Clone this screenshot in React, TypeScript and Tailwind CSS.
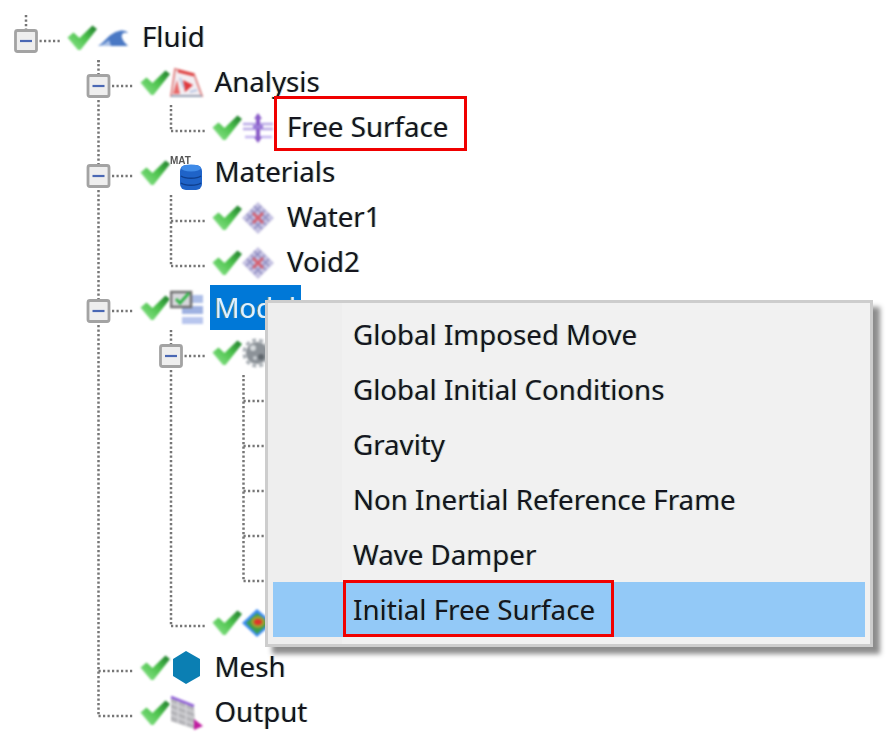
import type { ReactNode } from 'react';

// fake cleartype fringe + upscaling blur from the screenshot
const textLook =
	"font-['Noto_Sans','Open_Sans',sans-serif] text-[27.7px] leading-none blur-[0.55px] [text-shadow:1px_0_0_rgba(0,150,255,0.4),-1px_0_0_rgba(255,170,0,0.4)]";

const LEVEL_STEP = 72.5;
const ROW_MID = 22;

type TreeRow = {
	level: number;
	through?: number[];
	expanded?: boolean;
	last?: boolean;
	first?: boolean;
	label?: string;
	icon?: ReactNode;
	selected?: boolean;
	marked?: boolean;
};

function CheckMark() {
	return (
		<svg width="30" height="26" viewBox="0 0 30 26" className="shrink-0 blur-[0.8px]">
			<defs>
				<linearGradient id="chk" x1="0" y1="1" x2="1" y2="0">
					<stop offset="0" stopColor="#8fe68f" />
					<stop offset="0.55" stopColor="#4cc24c" />
					<stop offset="1" stopColor="#1d7a2a" />
				</linearGradient>
			</defs>
			<path d="M0.5 12.5 L6.5 7.5 L12.5 13 L25.5 0.5 L30 4 L13.5 25 L11 25 Z" fill="url(#chk)" />
		</svg>
	);
}

function WaveIcon() {
	return (
		<svg width="32" height="34" viewBox="0 0 32 34" className="blur-[0.8px]">
			<path
				d="M1 25 C8 21 12 12 22 10 C26 9 30 10 31 12 C26 11 24 13 25 17 C26 20 29 23 31 25 Z"
				fill="#4a78c4"
			/>
			<path d="M1 25 C5 24 9 22 12 19 L14 25 Z" fill="#a9c0e6" />
		</svg>
	);
}

function AnalysisIcon() {
	return (
		<svg width="34" height="34" viewBox="0 0 34 34" className="blur-[0.8px]">
			<path d="M5 3 L24 8 L32 30 L1 30 Z" fill="#f3eef2" stroke="#e28b8b" strokeWidth="2" />
			<path d="M1 30 L32 30" stroke="#9aa3b5" strokeWidth="2" />
			<path d="M8 5 L24 9" stroke="#e04848" strokeWidth="3" />
			<path d="M3 28 L7 14 L10 28 Z" fill="#e86a6a" />
			<path d="M13 14 L23 19 L15 26 Z" fill="#e0393f" />
			<path d="M10 12 L14 22 M20 26 L27 24" stroke="#b9c6e4" strokeWidth="2" />
		</svg>
	);
}

function FreeSurfaceIcon() {
	return (
		<svg width="32" height="34" viewBox="0 0 32 34" className="blur-[0.9px]">
			<path d="M1 13 H31 M1 18 H31" stroke="#b9a9e6" strokeWidth="2.5" />
			<path d="M3 26 H30" stroke="#c4b6f0" strokeWidth="2.5" />
			<path d="M16 4 V30" stroke="#8a5cc8" strokeWidth="4" />
			<path d="M11 14 H21 V18 H11 Z" fill="#9b7ad8" />
			<path d="M16 2 L20 8 H12 Z M16 32 L20 26 H12 Z" fill="#8a5cc8" />
		</svg>
	);
}

function MaterialsIcon() {
	return (
		<svg width="34" height="36" viewBox="0 0 34 36" className="blur-[0.6px]">
			<text x="0" y="9" fontSize="10" fontWeight="700" fontFamily="Liberation Sans, sans-serif" fill="#555">
				MAT
			</text>
			<rect x="10" y="10" width="22" height="25" rx="6" fill="#1f63c8" />
			<ellipse cx="21" cy="13" rx="10" ry="3.5" fill="#3f8be8" />
			<path d="M11 21 C15 24 27 24 31 21 M11 28 C15 31 27 31 31 28" stroke="#0f3f8e" strokeWidth="1.5" fill="none" />
		</svg>
	);
}

function MaterialDiamond() {
	return (
		<svg width="32" height="34" viewBox="0 0 32 34" className="blur-[0.9px]">
			<path d="M16 1 L32 17 L16 33 L0 17 Z" fill="#c5c2e2" />
			<path d="M9 9 L24 24 M5 13 L20 28 M12 5 L27 20 M23 9 L8 24 M27 13 L12 28 M19 5 L4 20" stroke="#8f8cc0" strokeWidth="1.5" />
			<path d="M11 12 L21 22 M21 12 L11 22" stroke="#d8606e" strokeWidth="2.5" />
		</svg>
	);
}

function ModelIcon() {
	return (
		<svg width="34" height="36" viewBox="0 0 34 36" className="blur-[0.8px]">
			<rect x="12" y="16" width="21" height="8" fill="#9fb2e2" />
			<rect x="12" y="27" width="21" height="7" fill="#b8c6ee" />
			<rect x="17" y="5" width="16" height="8" fill="#aebfe8" />
			<rect x="1" y="2" width="20" height="15" fill="#d8d8dc" stroke="#6f6f6f" strokeWidth="2.5" />
			<path d="M6 9 L10 13 L19 3" stroke="#35b54a" strokeWidth="3" fill="none" />
		</svg>
	);
}

function GearIcon() {
	return (
		<svg width="32" height="34" viewBox="0 0 32 34" className="blur-[0.9px]">
			<circle cx="15" cy="17" r="11" fill="#8c9298" />
			<circle cx="15" cy="17" r="13" fill="none" stroke="#a8aeb4" strokeWidth="3" strokeDasharray="4 3" />
			<circle cx="11" cy="12" r="3" fill="#d5d9dc" />
			<circle cx="19" cy="21" r="3" fill="#5f666c" />
			<circle cx="13" cy="22" r="2" fill="#c8cdd1" />
		</svg>
	);
}

function ContourIcon() {
	return (
		<svg width="32" height="34" viewBox="0 0 32 34" className="blur-[0.8px]">
			<path d="M15 3 L31 17 L15 31 L0 17 Z" fill="#3c8cf0" />
			<path d="M15 7 L27 17 L15 28 L4 17 Z" fill="#3aa04a" />
			<ellipse cx="16" cy="16" rx="7" ry="6" fill="#a0a030" />
			<ellipse cx="16" cy="16" rx="4" ry="3" fill="#e0352a" />
		</svg>
	);
}

function MeshIcon() {
	return (
		<svg width="32" height="36" viewBox="0 0 32 36" className="blur-[0.7px]">
			<path d="M16 1 L30 9 L30 26 L16 34 L3 26 L3 9 Z" fill="#0b7fb3" />
		</svg>
	);
}

function OutputIcon() {
	return (
		<svg width="34" height="36" viewBox="0 0 34 36" className="blur-[0.8px]">
			<path d="M1 3 L24 12 L25 34 L1 26 Z" fill="#b4b4b8" />
			<path d="M1 2 L24 11" stroke="#9060d8" strokeWidth="2.5" />
			<path d="M1 8 L24 17 M1 14 L24 23 M1 20 L24 29 M8 6 V28 M16 9 V31" stroke="#d4d4d8" strokeWidth="1.5" />
			<path d="M24 24 L33 31 L24 35 Z" fill="#c01ea0" />
		</svg>
	);
}

function Guides({ row }: { row: TreeRow }) {
	const { level, through = [], expanded, last, first } = row;
	const at = (l: number) => 26 + LEVEL_STEP * l;
	const x = at(level);
	const dots = { stroke: '#767676', strokeWidth: 2.5, strokeDasharray: '2.2 2.3' };
	return (
		<svg width={67 + LEVEL_STEP * level} height="45" className="shrink-0 overflow-visible blur-[0.4px]">
			{through.map((l) => (
				<line key={l} x1={at(l)} x2={at(l)} y1="0" y2="45" {...dots} />
			))}
			<line x1={x} x2={x} y1={first ? -4 : 0} y2={last || first ? ROW_MID : 45} {...dots} />
			<line x1={x} x2={x + 36} y1={ROW_MID} y2={ROW_MID} {...dots} />
			{expanded && <line x1={at(level + 1)} x2={at(level + 1)} y1="41" y2="45" {...dots} />}
			{first && <line x1={at(1)} x2={at(1)} y1="41" y2="45" {...dots} />}
			{expanded && (
				<g>
					<rect x={x - 10.5} y={ROW_MID - 10.5} width="21" height="21" rx="2" fill="#eeeeee" stroke="#a3a3a3" strokeWidth="2.8" />
					<line x1={x - 6} x2={x + 6} y1={ROW_MID} y2={ROW_MID} stroke="#4a68b4" strokeWidth="2.2" />
				</g>
			)}
		</svg>
	);
}

const rows: TreeRow[] = [
	{ level: 0, expanded: true, first: true, label: 'Fluid', icon: <WaveIcon /> },
	{ level: 1, expanded: true, label: 'Analysis', icon: <AnalysisIcon /> },
	{ level: 2, through: [1], last: true, label: 'Free Surface', icon: <FreeSurfaceIcon />, marked: true },
	{ level: 1, expanded: true, label: 'Materials', icon: <MaterialsIcon /> },
	{ level: 2, through: [1], label: 'Water1', icon: <MaterialDiamond /> },
	{ level: 2, through: [1], last: true, label: 'Void2', icon: <MaterialDiamond /> },
	{ level: 1, expanded: true, label: 'Model', icon: <ModelIcon />, selected: true },
	{ level: 2, through: [1], expanded: true, icon: <GearIcon /> },
	{ level: 3, through: [1, 2] },
	{ level: 3, through: [1, 2] },
	{ level: 3, through: [1, 2] },
	{ level: 3, through: [1, 2] },
	{ level: 3, through: [1, 2], last: true },
	{ level: 2, through: [1], last: true, icon: <ContourIcon /> },
	{ level: 1, through: [], label: 'Mesh', icon: <MeshIcon /> },
	{ level: 1, through: [], last: true, label: 'Output', icon: <OutputIcon /> },
];

const menuItems = [
	'Global Imposed Move',
	'Global Initial Conditions',
	'Gravity',
	'Non Inertial Reference Frame',
	'Wave Damper',
	'Initial Free Surface',
];

function Row({ row }: { row: TreeRow }) {
	return (
		<div className="flex h-[45px]">
			<Guides row={row} />
			{row.icon && (
				<div className="flex h-full items-center pb-2">
					<CheckMark />
					<div className="flex w-[45px] shrink-0 items-center">{row.icon}</div>
					{row.label &&
						(row.selected ? (
							<span className="-ml-[5px] flex h-[45px] items-center bg-[#0078d7] px-[5px] pt-[1px]">
								<span className={`text-[#dff0ff] ${textLook}`}>{row.label}</span>
							</span>
						) : (
							<span className="relative -mb-[1px] whitespace-nowrap">
								<span className={`text-[#15151f] ${textLook}`}>{row.label}</span>
								{row.marked && (
									<span className="absolute -bottom-[8px] -left-[13px] -right-[19px] -top-[17px] border-[3px] border-[#f00000]" />
								)}
							</span>
						))}
				</div>
			)}
		</div>
	);
}

export default function App() {
	return (
		<div className="relative h-[734px] w-[896px] overflow-hidden bg-white pt-[19px]">
			{rows.map((row, i) => (
				<Row key={i} row={row} />
			))}

			{/* context menu */}
			<div className="absolute left-[265px] top-[300px] h-[347px] w-[608px] border-[3px] border-[#cdcdcd] bg-[linear-gradient(90deg,#eeeeee_0,#eeeeee_74px,#f1f1f1_74px)] px-[5px] pt-[4px] shadow-[7px_7px_5px_rgba(0,0,0,0.45)]">
				{menuItems.map((item, i) => {
					const active = i === menuItems.length - 1;
					return (
						<div
							key={item}
							className={`flex h-[55px] items-center pt-[3px] pl-[80px] ${active ? 'bg-[#93c9f7]' : ''}`}
						>
							<span className="relative whitespace-nowrap">
								<span className={`text-[#15151f] ${textLook}`}>{item}</span>
								{active && (
									<span className="absolute -bottom-[11px] -left-[10px] -right-[19px] -top-[16px] border-[3px] border-[#f00000]" />
								)}
							</span>
						</div>
					);
				})}
			</div>
		</div>
	);
}
